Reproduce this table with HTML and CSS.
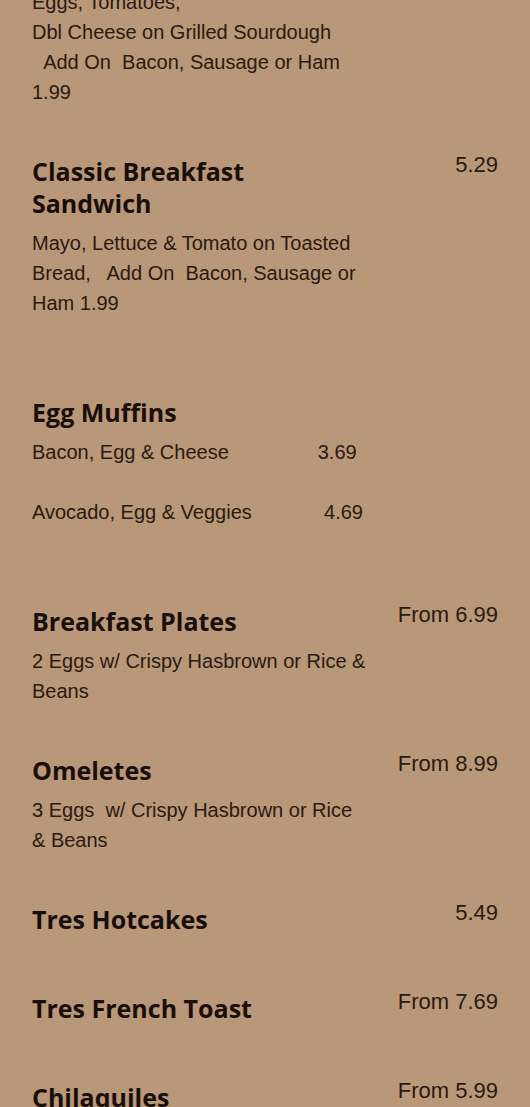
FILE: index.html
```html
<!DOCTYPE html>
<html>
<head>
<meta charset="utf-8">
<link rel="stylesheet" href="styles.css">
</head>
<body>
<main class="menu">
  <section class="item first">
    <div class="left">
      <p class="desc">Eggs, Tomatoes,
Dbl Cheese on Grilled Sourdough
  Add On  Bacon, Sausage or Ham 1.99</p>
    </div>
    <div class="price"></div>
  </section>

  <section class="item">
    <div class="left">
      <h2 class="title">Classic Breakfast Sandwich</h2>
      <p class="desc">Mayo, Lettuce &amp; Tomato on Toasted Bread,   Add On  Bacon, Sausage or Ham 1.99
&#8203;</p>
    </div>
    <div class="price">5.29</div>
  </section>

  <section class="item">
    <div class="left">
      <h2 class="title">Egg Muffins</h2>
      <p class="desc">Bacon, Egg &amp; Cheese                3.69

Avocado, Egg &amp; Veggies             4.69
&#8203;</p>
    </div>
    <div class="price"></div>
  </section>

  <section class="item">
    <div class="left">
      <h2 class="title">Breakfast Plates</h2>
      <p class="desc">2 Eggs w/ Crispy Hasbrown or Rice &amp; Beans</p>
    </div>
    <div class="price">From 6.99</div>
  </section>

  <section class="item">
    <div class="left">
      <h2 class="title">Omeletes</h2>
      <p class="desc">3 Eggs  w/ Crispy Hasbrown or Rice &amp; Beans</p>
    </div>
    <div class="price">From 8.99</div>
  </section>

  <section class="item">
    <div class="left">
      <h2 class="title">Tres Hotcakes</h2>
      <p class="desc"></p>
    </div>
    <div class="price">5.49</div>
  </section>

  <section class="item">
    <div class="left">
      <h2 class="title">Tres French Toast</h2>
      <p class="desc"></p>
    </div>
    <div class="price">From 7.69</div>
  </section>

  <section class="item">
    <div class="left">
      <h2 class="title">Chilaquiles</h2>
      <p class="desc"></p>
    </div>
    <div class="price">From 5.99</div>
  </section>
</main>
</body>
</html>
```

FILE: styles.css
```css
html, body {
  margin: 0;
  padding: 0;
  background: #b99779;
}
body {
  font-family: "Liberation Sans", Arial, sans-serif;
  color: #2a1a10;
  overflow: hidden;
}
.menu {
  margin-top: -13px;
  padding: 0 32px;
  display: flex;
  flex-direction: column;
  gap: 48px;
}
.item {
  display: flex;
  align-items: flex-start;
}
.left {
  width: 336px;
  flex: none;
  display: flex;
  flex-direction: column;
  gap: 9px;
}
.title {
  margin: 0;
  font-family: "Open Sans", "Lato", sans-serif;
  font-weight: 700;
  font-size: 25px;
  line-height: 32px;
  color: #1a0e08;
}
.desc {
  margin: 0;
  font-size: 20px;
  line-height: 30px;
  white-space: pre-wrap;
}
.price {
  flex: 1;
  text-align: right;
  font-size: 22px;
  line-height: 20px;
}
```
